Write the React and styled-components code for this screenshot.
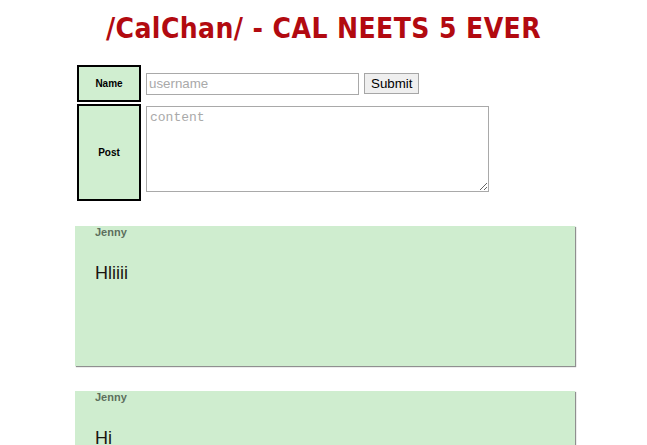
import styled, { createGlobalStyle } from "styled-components";

const GlobalStyle = createGlobalStyle`
  html, body {
    margin: 0;
    padding: 0;
    background: #ffffff;
  }
  body {
    font-family: "Liberation Sans", Arial, sans-serif;
  }
`;

const Page = styled.div`
  padding: 8px;
`;

const Title = styled.h1`
  margin: 4px 0 0;
  text-align: center;
  font-family: "DejaVu Sans Condensed", "DejaVu Sans", Verdana, sans-serif;
  font-stretch: condensed;
  font-weight: bold;
  font-size: 28px;
  line-height: 33px;
  letter-spacing: 0.4px;
  color: #b20a10;
`;

const Column = styled.div`
  width: 500px;
  margin-left: 67px;
`;

const FormGrid = styled.form`
  display: grid;
  grid-template-columns: 64px auto;
  grid-template-rows: 37px 97px;
  gap: 2px;
  margin: 20px 0 0 2px;
`;

const LabelCell = styled.div`
  box-sizing: border-box;
  display: flex;
  align-items: center;
  justify-content: center;
  border: 2px solid #000;
  background: #d0eed0;
  font-size: 10px;
  font-weight: bold;
  color: #000;
`;

const FieldCell = styled.div`
  display: flex;
  align-items: ${(p) => (p.$top ? "flex-start" : "center")};
  gap: 5px;
  padding: ${(p) => (p.$top ? "2px 3px" : "3px")};
`;

const TextInput = styled.input`
  box-sizing: border-box;
  width: 213px;
  height: 22px;
  padding: 1px 2px;
  border: 1px solid #a9a9a9;
  font-family: "Liberation Sans", Arial, sans-serif;
  font-size: 13.33px;
  &::placeholder {
    color: #a9a9a9;
  }
`;

const SubmitButton = styled.button`
  box-sizing: border-box;
  width: 55px;
  height: 21px;
  padding: 0 6px;
  border: 1px solid #a6a6a6;
  background: #efefef;
  font-family: "Liberation Sans", Arial, sans-serif;
  font-size: 13.33px;
  color: #000;
`;

const ContentArea = styled.textarea`
  box-sizing: border-box;
  display: block;
  width: 343px;
  height: 86px;
  padding: 3px 3px;
  border: 1px solid #a9a9a9;
  font-family: "Liberation Mono", "Courier New", monospace;
  font-size: 13px;
  &::placeholder {
    color: #a9a9a9;
  }
`;

const PostList = styled.div`
  display: flex;
  flex-direction: column;
  gap: 25px;
  margin-top: 25px;
`;

const PostCard = styled.div`
  box-sizing: border-box;
  height: 140px;
  padding: 0 20px;
  background: #cfedcf;
  box-shadow: 1px 1px 1px #8f8f8f;
`;

const Author = styled.div`
  font-size: 11px;
  line-height: 13px;
  font-weight: bold;
  color: #5d6f5d;
`;

const Body = styled.div`
  margin-top: 24px;
  font-size: 18px;
  line-height: 21px;
  color: #1a1410;
`;

const posts = [
  { id: 1, author: "Jenny", content: "Hliiii" },
  { id: 2, author: "Jenny", content: "Hi" },
];

export default function App() {
  return (
    <>
      <GlobalStyle />
      <Page>
        <Title>/CalChan/ - CAL NEETS 5 EVER</Title>
        <Column>
          <FormGrid onSubmit={(e) => e.preventDefault()}>
            <LabelCell>Name</LabelCell>
            <FieldCell>
              <TextInput type="text" placeholder="username" />
              <SubmitButton type="submit">Submit</SubmitButton>
            </FieldCell>
            <LabelCell>Post</LabelCell>
            <FieldCell $top>
              <ContentArea placeholder="content" />
            </FieldCell>
          </FormGrid>
          <PostList>
            {posts.map((post) => (
              <PostCard key={post.id}>
                <Author>{post.author}</Author>
                <Body>{post.content}</Body>
              </PostCard>
            ))}
          </PostList>
        </Column>
      </Page>
    </>
  );
}
